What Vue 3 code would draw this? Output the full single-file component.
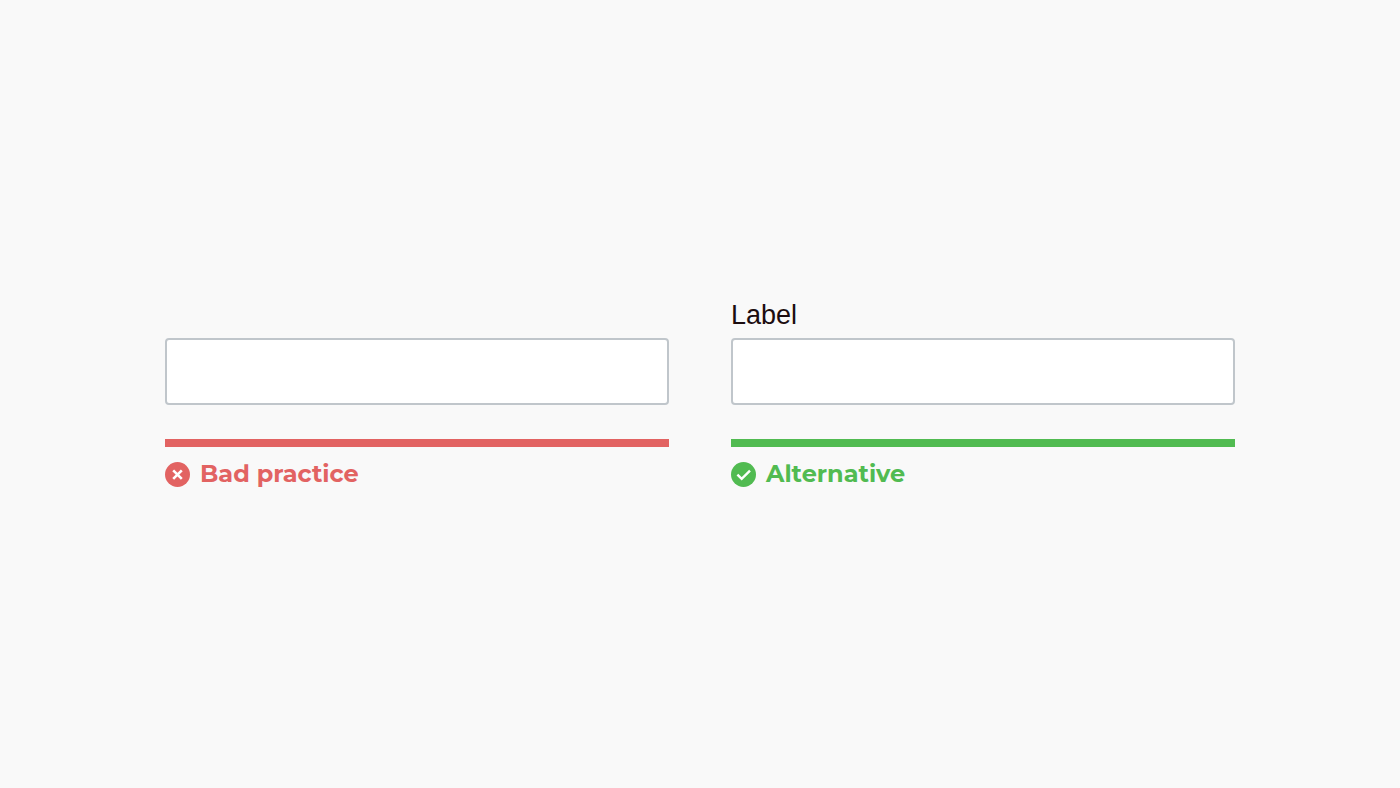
<script setup>
import { ref } from 'vue'

const examples = ref([
  { id: 'bad', label: '', caption: 'Bad practice', value: '' },
  { id: 'good', label: 'Label', caption: 'Alternative', value: '' },
])
</script>

<template>
  <main class="page">
    <section v-for="item in examples" :key="item.id" class="example" :class="item.id">
      <div class="label-row">
        <label v-if="item.label" :for="`field-${item.id}`">{{ item.label }}</label>
      </div>
      <input
        :id="`field-${item.id}`"
        v-model="item.value"
        class="field"
        type="text"
        :aria-labelledby="item.label ? undefined : `caption-${item.id}`"
      />
      <div class="caption">
        <svg class="icon" viewBox="0 0 25 25" aria-hidden="true">
          <circle cx="12.5" cy="12.5" r="12.5" fill="currentColor" />
          <path v-if="item.id === 'bad'" d="M8.2 8.3 16.8 16.9M16.8 8.3 8.2 16.9" stroke-width="2.6" />
          <path v-else d="M6.4 12.6 10.7 16.9 19 8.6" stroke-width="2.4" />
        </svg>
        <span :id="`caption-${item.id}`">{{ item.caption }}</span>
      </div>
    </section>
  </main>
</template>

<style>
body {
  margin: 0;
  background: #f9f9f9;
}
</style>

<style scoped>
.page {
  box-sizing: border-box;
  min-height: 100vh;
  max-width: 1070px;
  margin: 0 auto;
  display: grid;
  grid-template-columns: 1fr 1fr;
  column-gap: 62px;
  align-content: center;
}

.example {
  display: flex;
  flex-direction: column;
  min-width: 0;
}

.bad {
  color: #e26362;
}

.good {
  color: #51bb51;
}

.label-row {
  height: 38px;
  font: 27px/30px "Liberation Sans", Arial, sans-serif;
  color: #1c0d10;
}

.field {
  box-sizing: border-box;
  width: 100%;
  height: 67px;
  margin: 0;
  padding: 0 16px;
  border: 2px solid #c0c6cb;
  border-radius: 4px;
  background: #fff;
  color: #1c0d10;
  font: 27px "Liberation Sans", Arial, sans-serif;
}

.caption {
  display: flex;
  align-items: flex-start;
  gap: 10px;
  margin-top: 34px;
  padding: 15px 0 1px;
  border-top: 8px solid currentColor;
  font: 700 24px/24px Montserrat, Inter, sans-serif;
}

.icon {
  flex: none;
  width: 25px;
  height: 25px;
  fill: none;
}

.icon path {
  stroke: #fff;
}
</style>
